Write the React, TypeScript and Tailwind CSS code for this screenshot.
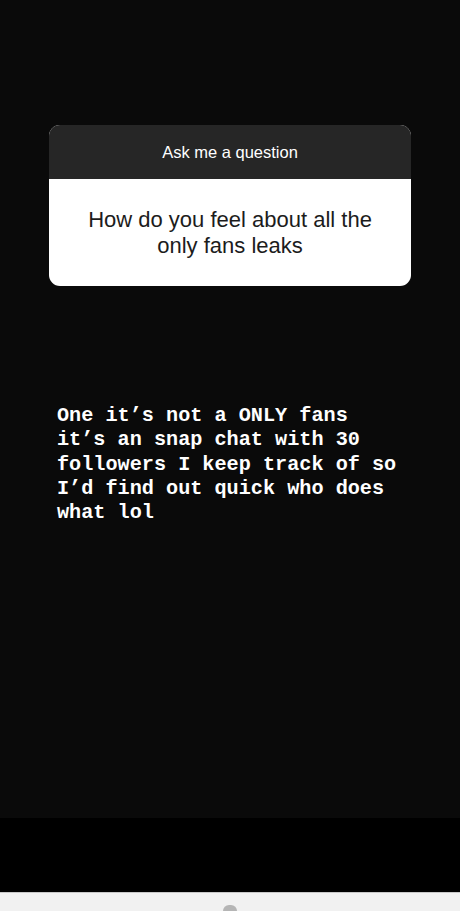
const lines = [
  "One it’s not a ONLY fans",
  "it’s an snap chat with 30",
  "followers I keep track of so",
  "I’d find out quick who does",
  "what lol",
];

export default function App() {
  return (
    <div className="flex h-[911px] w-[460px] flex-col overflow-hidden bg-black">
      <div className="h-[818px] bg-[#0a0a0a] px-[49px] pt-[125px]">
        <div className="overflow-hidden rounded-[11px] bg-white font-['Liberation_Sans',Arial,sans-serif]">
          <div className="flex h-[54px] items-center justify-center bg-[#262626] text-[16.5px] font-medium text-white">
            Ask me a question
          </div>
          <div className="flex h-[107px] items-center justify-center px-4 text-center text-[22px] leading-[26px] text-[#1c1c1c]">
            How do you feel about all the
            <br />
            only fans leaks
          </div>
        </div>

        <div className="mt-[118px] pl-[8px] font-['Liberation_Mono','Courier_New',monospace] text-[20.2px] font-bold leading-[24.3px] text-white">
          {lines.map((l, i) => (
            <div key={i} className="whitespace-pre">
              {l}
            </div>
          ))}
        </div>
      </div>
      <div className="flex-1 bg-black" />
      <div className="flex h-[19px] justify-center border-t border-[#c8c8c8] bg-[#f1f1f1] pt-[12px]">
        <div className="h-[12px] w-[14px] rounded-full bg-[#b5b5b5]" />
      </div>
    </div>
  );
}
